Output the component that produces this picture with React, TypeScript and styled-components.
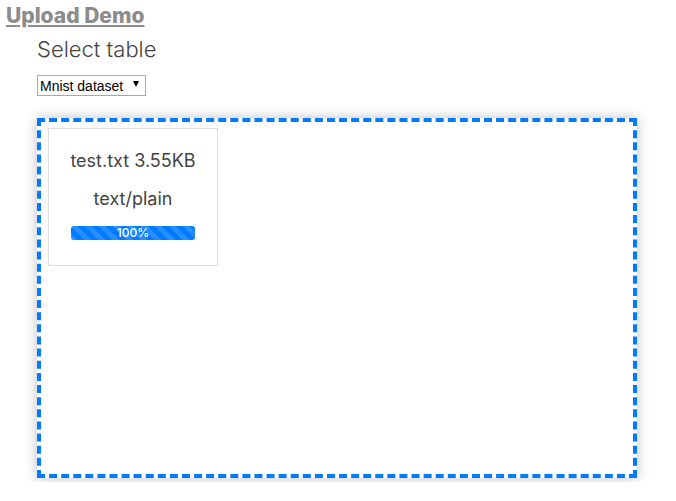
import React from "react";
import styled, { createGlobalStyle } from "styled-components";

const Global = createGlobalStyle`
  html, body { margin: 0; padding: 0; background: #fff; }
  body { font-family: "Inter", "Noto Sans", sans-serif; color: #444; }
`;

const Page = styled.div`
  padding: 4px 6px;
`;

const TitleLink = styled.a`
  display: inline-block;
  font-family: "Inter", sans-serif;
  font-weight: 800;
  font-size: 21px;
  line-height: 24px;
  color: #8c8c8c;
  text-decoration: underline;
  text-decoration-thickness: 2px;
  text-underline-offset: 2px;
`;

const Content = styled.div`
  margin-left: 31px;
  display: flex;
  flex-direction: column;
`;

const SubTitle = styled.h2`
  margin: 6px 0 0 0;
  font-weight: 300;
  font-size: 22px;
  line-height: 30px;
  color: #444;
`;

const SelectWrap = styled.div`
  position: relative;
  margin-top: 11px;
  align-self: flex-start;
  &::after {
    content: "";
    position: absolute;
    right: 7px;
    top: 6px;
    border-left: 3.5px solid transparent;
    border-right: 3.5px solid transparent;
    border-top: 6px solid #000;
    pointer-events: none;
  }
`;

const Select = styled.select`
  display: block;
  appearance: none;
  -webkit-appearance: none;
  height: 21px;
  width: 109px;
  font-family: "Liberation Sans", Arial, sans-serif;
  font-size: 14px;
  color: #000;
  border: 1px solid #a9a9a9;
  background: #fff;
  border-radius: 0;
  padding: 0 2px;
`;

const DropZone = styled.div`
  margin-top: 22px;
  width: 600px;
  height: 360px;
  box-sizing: border-box;
  border: 4px dashed #007bff;
  box-shadow: 0 0 12px rgba(0, 0, 0, 0.25);
  padding: 6px 7px;
  display: flex;
  align-items: flex-start;
  gap: 8px;
`;

const Card = styled.div`
  width: 170px;
  height: 138px;
  box-sizing: border-box;
  border: 1px solid #ddd;
  padding: 20px 10px 0;
  display: flex;
  flex-direction: column;
  align-items: center;
`;

const CardText = styled.div`
  font-size: 18px;
  line-height: 24px;
  color: #444;
  margin-bottom: 14px;
`;

const Progress = styled.div`
  width: 124px;
  height: 14px;
  border-radius: 3px;
  overflow: hidden;
  background: #e9ecef;
  margin-top: 1px;
`;

const Bar = styled.div`
  height: 100%;
  background-color: #007bff;
  background-image: linear-gradient(
    45deg,
    rgba(255, 255, 255, 0.15) 25%,
    transparent 25%,
    transparent 50%,
    rgba(255, 255, 255, 0.15) 50%,
    rgba(255, 255, 255, 0.15) 75%,
    transparent 75%,
    transparent
  );
  background-size: 14px 14px;
  color: #fff;
  font-size: 12px;
  font-weight: 500;
  line-height: 14px;
  text-align: center;
`;

export default function App() {
  const pct = 100;
  return (
    <>
      <Global />
      <Page>
        <TitleLink href="#">Upload Demo</TitleLink>
        <Content>
          <SubTitle>Select table</SubTitle>
          <SelectWrap>
            <Select defaultValue="mnist">
              <option value="mnist">Mnist dataset</option>
            </Select>
          </SelectWrap>
          <DropZone>
            <Card>
              <CardText>test.txt 3.55KB</CardText>
              <CardText>text/plain</CardText>
              <Progress>
                <Bar style={{ width: `${pct}%` }}>{pct}%</Bar>
              </Progress>
            </Card>
          </DropZone>
        </Content>
      </Page>
    </>
  );
}
